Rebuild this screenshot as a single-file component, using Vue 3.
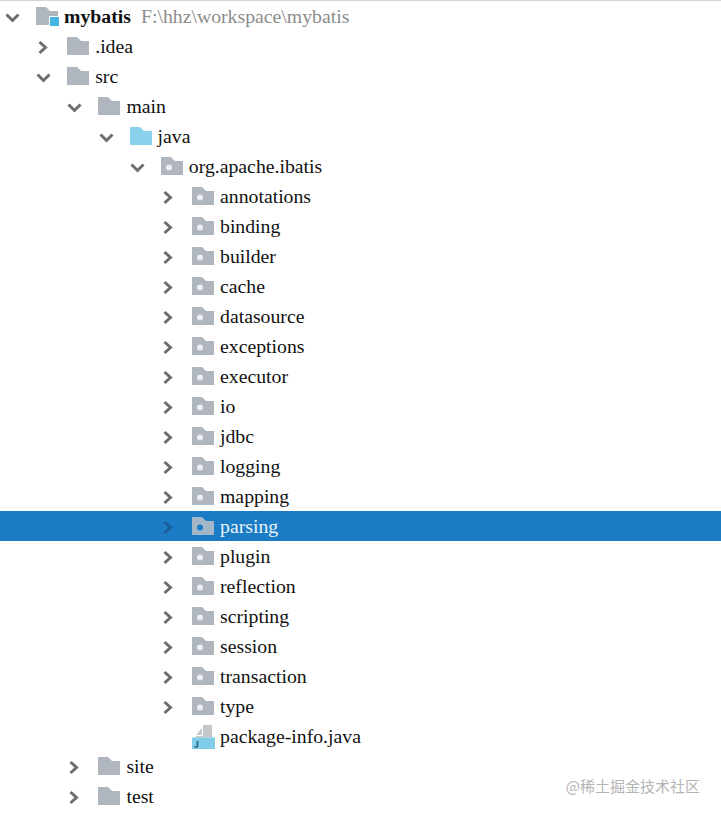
<script setup>
const rows = [
  { level: 0, name: 'mybatis', open: true, icon: 'module', hint: 'F:\\hhz\\workspace\\mybatis' },
  { level: 1, name: '.idea', open: false, icon: 'folder' },
  { level: 1, name: 'src', open: true, icon: 'folder' },
  { level: 2, name: 'main', open: true, icon: 'folder' },
  { level: 3, name: 'java', open: true, icon: 'source' },
  { level: 4, name: 'org.apache.ibatis', open: true, icon: 'package' },
  ...['annotations', 'binding', 'builder', 'cache', 'datasource', 'exceptions', 'executor', 'io', 'jdbc', 'logging', 'mapping', 'parsing', 'plugin', 'reflection', 'scripting', 'session', 'transaction', 'type'].map((name) => ({
    level: 5,
    name,
    open: false,
    icon: 'package',
    selected: name === 'parsing',
  })),
  { level: 5, name: 'package-info.java', icon: 'java', leaf: true },
  { level: 2, name: 'site', open: false, icon: 'folder' },
  { level: 2, name: 'test', open: false, icon: 'folder' },
]

function indent(level) {
  return { paddingLeft: `${5 + level * 31.2}px` }
}
</script>

<template>
  <div class="tree">
    <div
      v-for="row in rows"
      :key="row.name"
      class="row"
      :class="{ selected: row.selected }"
      :style="indent(row.level)"
    >
      <span class="arrow">
        <svg v-if="!row.leaf" width="15" height="15" viewBox="0 0 15 15">
          <path v-if="row.open" d="M1.5 4.5 L7.5 10.5 L13.5 4.5" />
          <path v-else d="M3.5 2 L9.5 7.5 L3.5 13" />
        </svg>
      </span>

      <svg v-if="row.icon === 'java'" class="icon java" width="22" height="24" viewBox="0 0 22 24">
        <path class="page" d="M4 10 L10 3 V10 Z M11 0 H20 V12.5 H4 V11 H11 Z" />
        <rect class="badge" x="0" y="12.5" width="23" height="11.5" />
        <path class="letter" d="M5.5 16 V21 Q5.5 22 4 22 H2.5" />
      </svg>
      <svg v-else class="icon" width="22" height="18" viewBox="0 0 22 18">
        <path class="folder" :class="row.icon" d="M0 0 H10 L14 4 H22 V18 H0 Z" />
        <circle v-if="row.icon === 'package'" class="dot" cx="8" cy="10.5" r="3" />
        <template v-if="row.icon === 'module'">
          <rect x="13" y="9" width="11" height="11" fill="#fff" />
          <rect x="14" y="10" width="9" height="9" class="corner" />
        </template>
      </svg>

      <span class="name" :class="{ bold: row.icon === 'module' }">{{ row.name }}</span>
      <span v-if="row.hint" class="hint">{{ row.hint }}</span>
    </div>
    <span class="watermark">@稀土掘金技术社区</span>
  </div>
</template>

<style scoped>
.tree {
  position: relative;
  width: 721px;
  height: 816px;
  overflow: hidden;
  box-sizing: border-box;
  border-top: 1px solid #d4d4d4;
  background: #fff;
  font-family: "Liberation Serif", serif;
  font-size: 19.75px;
  color: #111;
}

.row {
  display: flex;
  align-items: center;
  height: 30px;
  box-sizing: border-box;
}

.row.selected {
  background: #1b7bc4;
  color: #eaf4fb;
}

.arrow {
  display: flex;
  justify-content: center;
  width: 15px;
  height: 15px;
  margin-top: 2px;
  margin-right: 16px;
  flex-shrink: 0;
}

.arrow path {
  fill: none;
  stroke: #6c6e70;
  stroke-width: 3;
}

.selected .arrow path {
  stroke: #1a5c9c;
}

.icon {
  flex-shrink: 0;
  overflow: visible;
}

.icon.java {
  margin-top: 2px;
}

.folder {
  fill: #b0b6bd;
}

.folder.source {
  fill: #8bd0ec;
}

.selected .folder {
  fill: #a3b7c9;
}

.dot {
  fill: #eceef0;
}

.selected .dot {
  fill: #1b7bc4;
}

.corner {
  fill: #45b5e2;
}

.page {
  fill: #c4c7ca;
}

.badge {
  fill: #7fcde8;
}

.letter {
  fill: none;
  stroke: #2a5f80;
  stroke-width: 1.6;
}

.name {
  margin-left: 6px;
  white-space: nowrap;
}

.name.bold {
  font-weight: 700;
}

.hint {
  margin-left: 10px;
  color: #8c8c8c;
  white-space: nowrap;
}

.watermark {
  position: absolute;
  right: 21px;
  top: 774px;
  font-family: "Noto Sans CJK SC", sans-serif;
  font-size: 15px;
  color: #b4b4b4;
  white-space: nowrap;
}
</style>
